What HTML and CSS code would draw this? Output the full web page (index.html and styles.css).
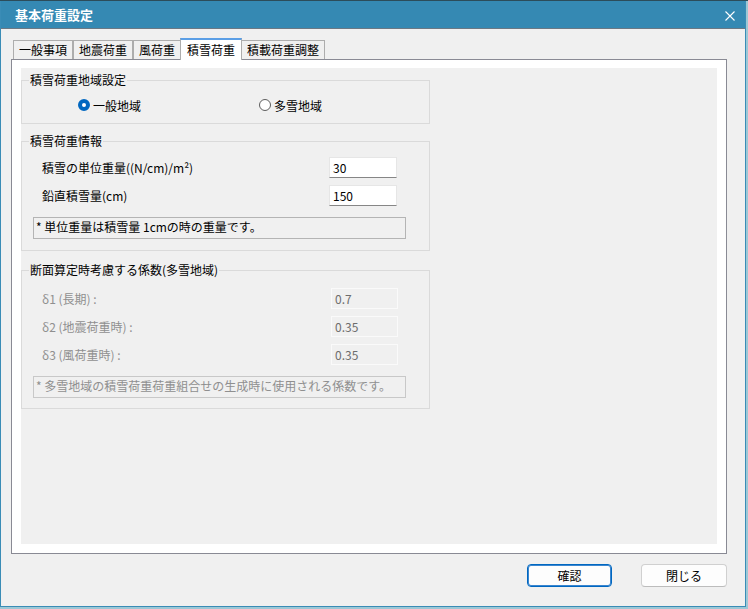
FILE: index.html
```html
<!DOCTYPE html>
<html lang="ja">
<head>
    <meta charset="UTF-8">
    <title>基本荷重設定</title>
    <link rel="stylesheet" href="styles.css">
</head>
<body>
    <div class="window">
        <div class="titlebar">
            <span class="title">基本荷重設定</span>
            <svg class="close" width="10" height="10" viewBox="0 0 10 10">
                <path d="M0.5 0.5 L9.5 9.5 M9.5 0.5 L0.5 9.5" stroke="#fff" stroke-width="1.1" fill="none"/>
            </svg>
        </div>
        <div class="client">
            <div class="tabs">
                <div class="tab">一般事項</div>
                <div class="tab">地震荷重</div>
                <div class="tab">風荷重</div>
                <div class="tab active">積雪荷重</div>
                <div class="tab">積載荷重調整</div>
            </div>
            <div class="panel">
                <div class="page">
                    <fieldset class="group area">
                        <legend>積雪荷重地域設定</legend>
                        <div class="radios">
                            <label class="radio on"><span class="dot"></span>一般地域</label>
                            <label class="radio"><span class="dot"></span>多雪地域</label>
                        </div>
                    </fieldset>

                    <fieldset class="group info">
                        <legend>積雪荷重情報</legend>
                        <div class="row">
                            <span class="lbl">積雪の単位重量((N/cm)/m²)</span>
                            <span class="txt">30</span>
                        </div>
                        <div class="row">
                            <span class="lbl">鉛直積雪量(cm)</span>
                            <span class="txt">150</span>
                        </div>
                        <div class="note">* 単位重量は積雪量 1cmの時の重量です。</div>
                    </fieldset>

                    <fieldset class="group coef">
                        <legend>断面算定時考慮する係数(多雪地域)</legend>
                        <div class="row off">
                            <span class="lbl">δ1 (長期) :</span>
                            <span class="txt">0.7</span>
                        </div>
                        <div class="row off">
                            <span class="lbl">δ2 (地震荷重時) :</span>
                            <span class="txt">0.35</span>
                        </div>
                        <div class="row off">
                            <span class="lbl">δ3 (風荷重時) :</span>
                            <span class="txt">0.35</span>
                        </div>
                        <div class="note off">* 多雪地域の積雪荷重荷重組合せの生成時に使用される係数です。</div>
                    </fieldset>
                </div>
            </div>
            <div class="buttons">
                <button class="btn primary">確認</button>
                <button class="btn">閉じる</button>
            </div>
        </div>
    </div>
</body>
</html>
```

FILE: styles.css
```css
body {
    margin: 0;
    background-color: #9cc8d6;
    font-family: "Noto Sans CJK JP", "Noto Sans", sans-serif;
    font-size: 12px;
    color: #000;
    height: 609px;
    overflow: hidden;
    border-top: 1px solid #2c4c5a;
}
.window {
    width: 746px;
    height: 606px;
    box-sizing: border-box;
    border: 1px solid #3a8cb6;
    border-top: none;
    background-color: #f0f0f0;
}
.titlebar {
    height: 27px;
    background-color: #3589b3;
    border-bottom: 1px solid #6b7884;
    display: flex;
    align-items: center;
    justify-content: space-between;
    padding: 0 10px 0 14px;
}
.title {
    color: #fff;
    font-weight: bold;
    font-size: 13px;
}
.close {
    margin-top: 2px;
}
.client {
    padding-top: 9px;
}
.tabs {
    display: flex;
    align-items: flex-end;
    height: 21px;
    margin-left: 12px;
}
.tab {
    box-sizing: border-box;
    height: 19px;
    line-height: 17px;
    padding: 0 5px;
    border: 1px solid #adadad;
    border-bottom: none;
    background-color: #f0f0f0;
}
.tab.active {
    position: relative;
    z-index: 1;
    height: 22px;
    margin: 0 -1px -1px -1px;
    padding: 0 6px;
    line-height: 19px;
    background-color: #fff;
    border-top: 2px solid #5b9fe6;
}
.panel {
    width: 716px;
    height: 495px;
    box-sizing: border-box;
    margin-left: 10px;
    border: 1px solid #898a94;
    background-color: #fff;
    padding: 8px 9px 9px 9px;
}
.page {
    height: 100%;
    background-color: #f0f0f0;
    padding-top: 4px;
    box-sizing: border-box;
}
.group {
    width: 409px;
    min-width: 0;
    box-sizing: border-box;
    margin: 0;
    padding: 0;
    border: 1px solid #dadada;
}
.group legend {
    margin-left: 7px;
    padding: 0 1px;
    line-height: 16px;
}
.area .radios {
    display: flex;
    align-items: center;
    height: 20px;
    padding: 7px 0 8px 56px;
}
.radio {
    display: flex;
    align-items: center;
    gap: 3px;
    width: 181px;
}
.radio:last-child {
    width: auto;
}
.dot {
    width: 12px;
    height: 12px;
    box-sizing: border-box;
    border-radius: 50%;
    border: 1px solid #5d5d5d;
    background-color: #fff;
}
.radio.on .dot {
    border: 4px solid #0067c0;
    background-color: #fff;
}
.info {
    margin-top: 9px;
    padding: 8px 0 11px 0;
}
.coef {
    margin-top: 11px;
    padding: 10px 0 10px 0;
}
.row {
    display: flex;
    align-items: center;
    height: 21px;
    padding: 0 32px 0 20px;
    margin-bottom: 7px;
}
.lbl {
    flex: 1;
}
.txt {
    width: 68px;
    height: 21px;
    box-sizing: border-box;
    padding-left: 3px;
    line-height: 19px;
    background-color: #fff;
    border: 1px solid #e6e6e6;
    border-bottom: 1px solid #868686;
}
.row.off {
    padding-right: 31px;
}
.row.off .lbl {
    color: #8f8f8f;
}
.row.off .txt {
    width: 67px;
    background-color: #f0f0f0;
    border: 1px solid #fafafa;
    color: #6d6d6d;
}
.note {
    width: 373px;
    height: 22px;
    box-sizing: border-box;
    margin: 11px 0 0 11px;
    padding-left: 2px;
    line-height: 18px;
    border: 1px solid #b4b4b4;
}
.note.off {
    color: #8f8f8f;
    border-color: #c8c8c8;
}
.buttons {
    width: 716px;
    margin: 10px 0 0 10px;
    display: flex;
    justify-content: flex-end;
    gap: 29px;
}
.btn {
    width: 86px;
    height: 23px;
    font-family: inherit;
    font-size: 12px;
    background-color: #fdfdfd;
    border: 1px solid #d0d0d0;
    border-bottom-color: #bcbcbc;
    border-radius: 4px;
    padding: 0;
    color: #000;
}
.btn.primary {
    width: 85px;
    border: 1px solid #0067c0;
    box-shadow: inset 0 0 0 1px #3a86d0;
}
```
